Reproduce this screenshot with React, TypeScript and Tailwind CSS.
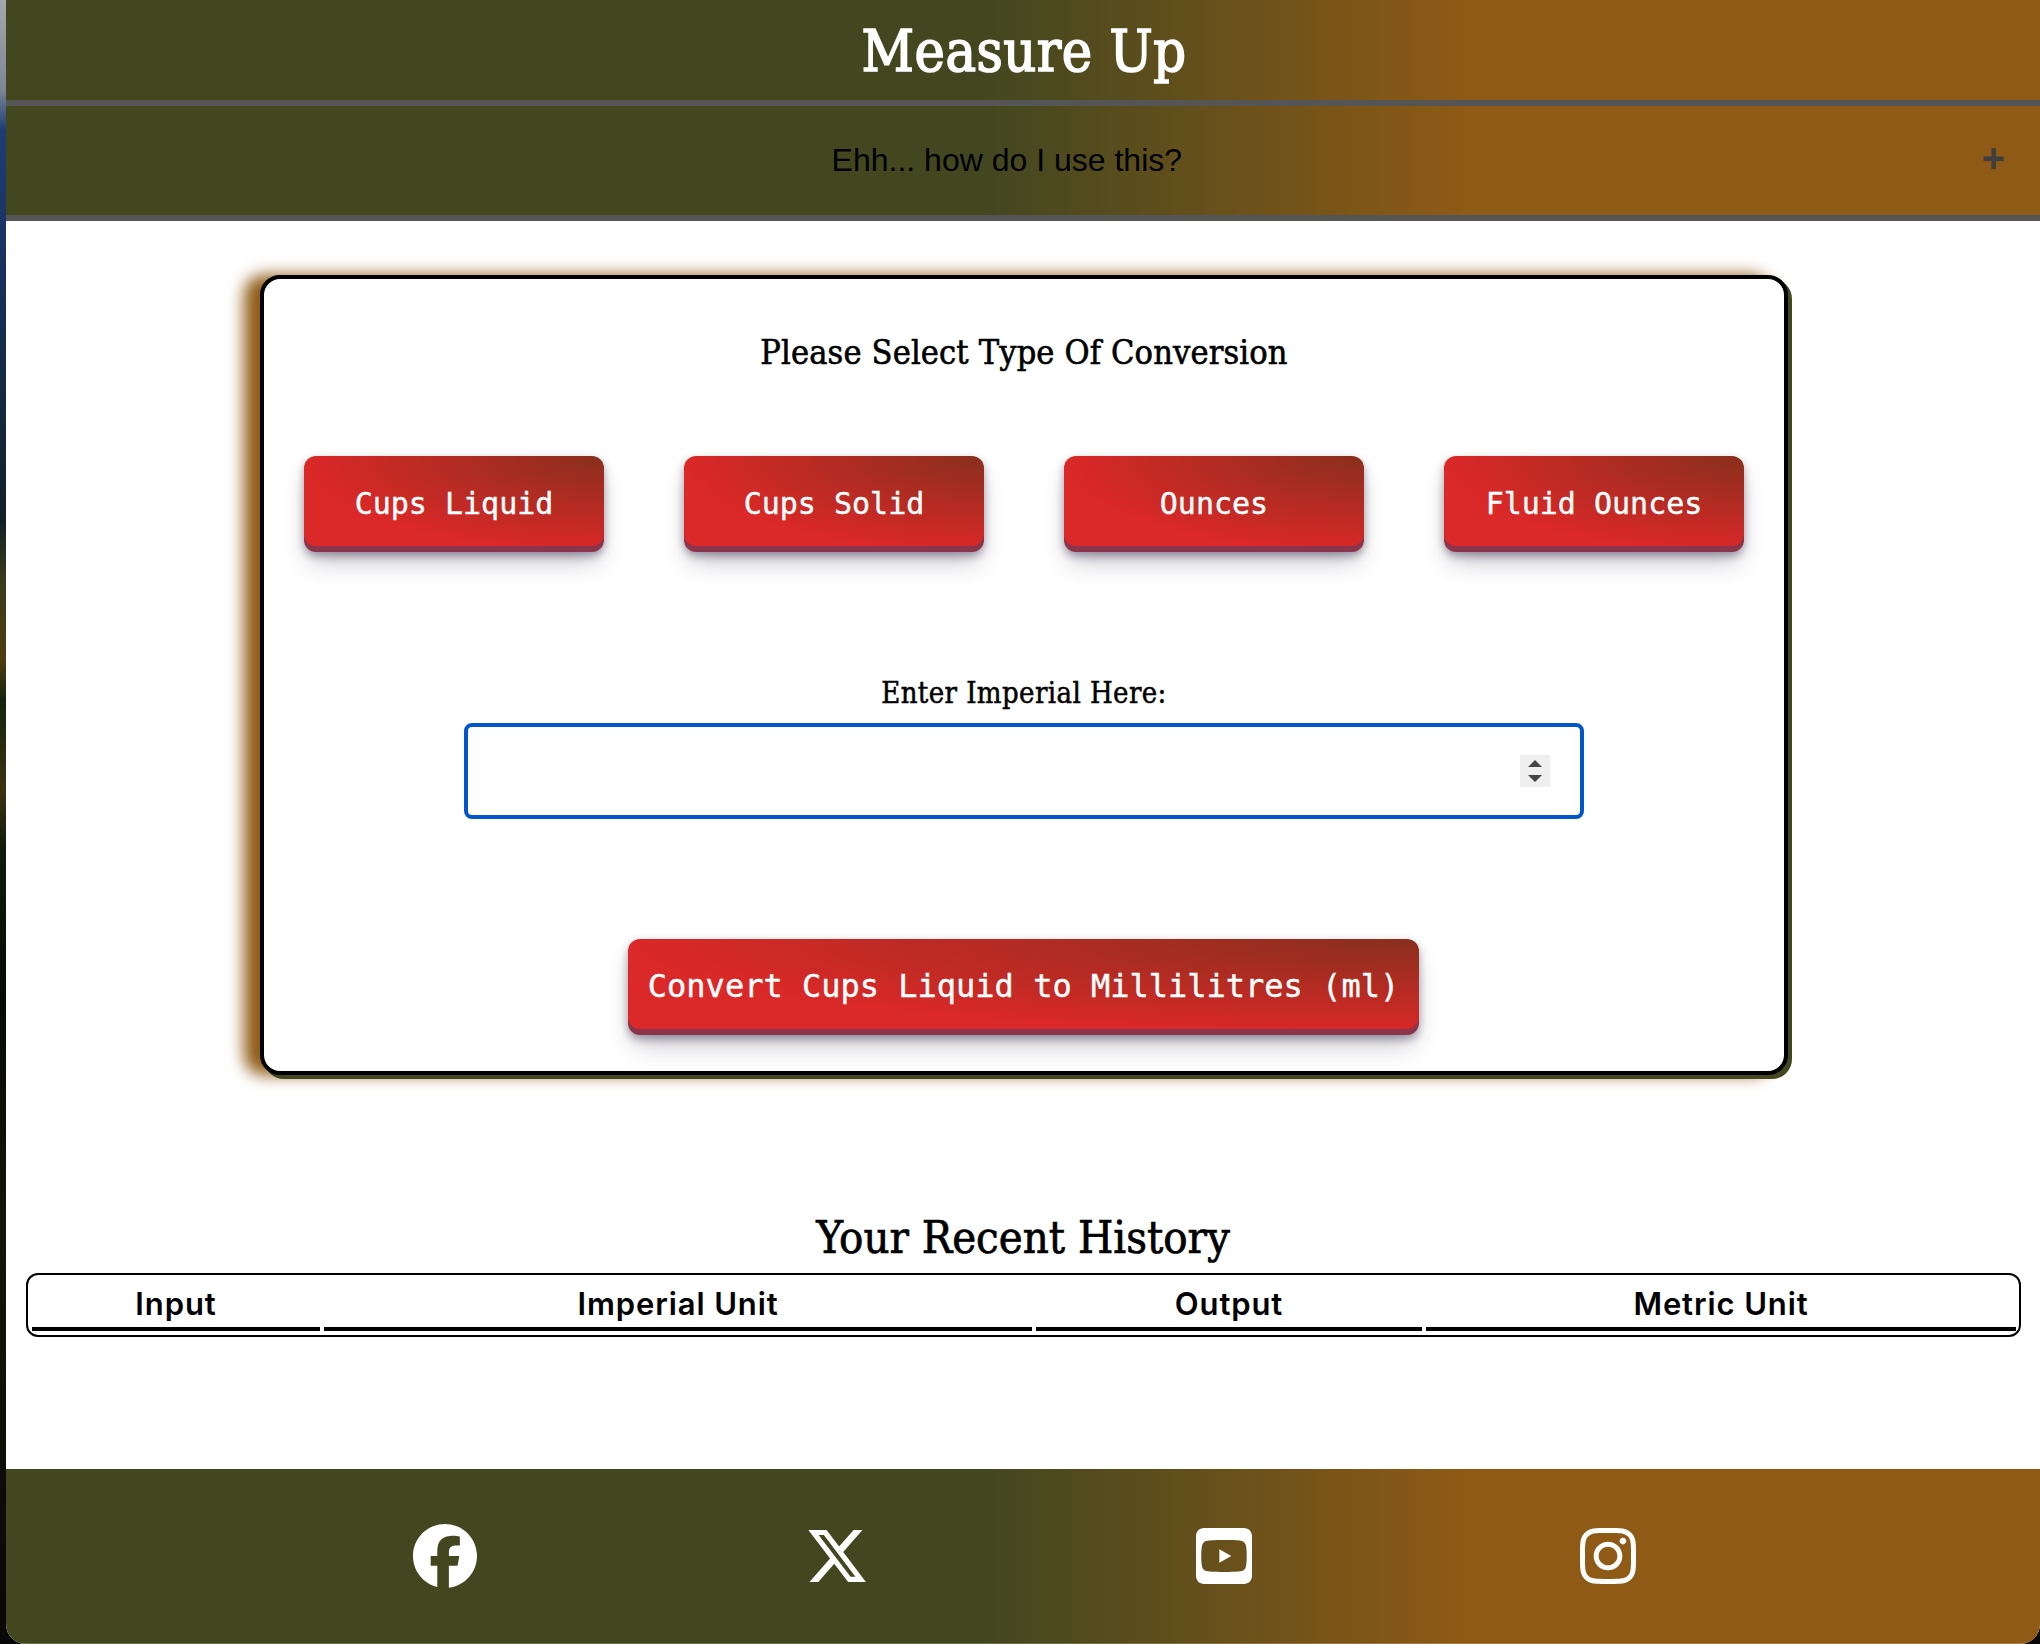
import type { ReactNode } from "react";
import { FaFacebook, FaInstagram, FaSquareYoutube, FaXTwitter } from "react-icons/fa6";

const SERIF = "font-['DejaVu_Serif_Condensed','DejaVu_Serif',serif] [font-stretch:condensed]";
const BAND = "bg-[linear-gradient(90deg,#424720_48%,#8f5a15_72%)]";

function RedButton({ children, className }: { children: ReactNode; className: string }) {
  return (
    <button
      className={`${className} flex h-24 items-center justify-center whitespace-pre rounded-xl bg-[radial-gradient(100%_100%_at_100%_0,#892f1d_0,#db2828_100%)] pb-[2px] font-['DejaVu_Sans_Mono',monospace] text-white [-webkit-text-stroke:0.4px_white] shadow-[0_4px_8px_rgba(45,35,66,0.4),0_14px_26px_-6px_rgba(45,35,66,0.3),inset_0_-6px_0_rgba(58,65,111,0.5)]`}
    >
      {children}
    </button>
  );
}

const UNITS = ["Cups Liquid", "Cups Solid", "Ounces", "Fluid Ounces"];
const COLUMNS = ["Input", "Imperial Unit", "Output", "Metric Unit"];

export default function App() {
  return (
    <div className="flex h-[1644px] w-[2040px] overflow-hidden bg-[linear-gradient(180deg,#a3a8ad_0px,#7c8794_90px,#1f3c74_130px,#1a3263_250px,#14283f_400px,#122026_520px,#3a3a1c_580px,#4f3c12_660px,#14240f_700px,#3c3210_790px,#0f1a0b_850px,#050b05_1000px,#141509_1230px,#080806_1644px)]">
      <div className="ml-[6px] flex w-[2034px] flex-col overflow-hidden rounded-b-[20px] bg-white text-black">
        <header className={`${BAND} flex h-[100px] items-center justify-center`}>
          <h1 className={`${SERIF} pl-[2px] pt-[3px] text-[57px] leading-none tracking-[0.5px] text-white [-webkit-text-stroke:1.6px_white]`}>Measure Up</h1>
        </header>
        <button className={`${BAND} flex h-[121px] items-center border-y-[6px] border-[#555] pl-[26px] pr-[35px] font-['Liberation_Sans',sans-serif]`}>
          <span className="flex-1 pb-[2px] text-center text-[32px] leading-none">Ehh... how do I use this?</span>
          <span className="pb-[6px] text-[40px] font-bold leading-none text-[#3f3f3f]">+</span>
        </button>

        <main className="flex flex-1 flex-col items-center">
          <section className="ml-[2px] mt-[54px] flex h-[800px] w-[1528px] flex-col items-center rounded-[20px] border-4 border-black bg-white shadow-[4px_4px_0_#424720,-16px_0_16px_#8f5a15]">
            <h2 className={`${SERIF} mt-[53px] h-10 text-[34px] leading-10 tracking-[0.15px] [-webkit-text-stroke:0.6px_black]`}>Please Select Type Of Conversion</h2>
            <div className="mt-[84px] flex gap-20">
              {UNITS.map((u) => (
                <RedButton key={u} className="w-[300px] text-[30px]">{u}</RedButton>
              ))}
            </div>
            <label className={`${SERIF} mt-[121px] h-10 text-[29px] leading-10 tracking-[0.4px] [-webkit-text-stroke:0.5px_black]`}>Enter Imperial Here:</label>
            <div className="mt-[10px] flex h-24 w-[1120px] items-center justify-end rounded-lg border-4 border-[#0057cc] pr-[30px]">
              <div className="flex h-8 w-[30px] items-center justify-center bg-[#efefef]">
                <svg viewBox="0 0 16 24" className="h-6 w-4 fill-[#444]">
                  <path d="M1 8 8 1l7 7zM1 16l7 7 7-7z" />
                </svg>
              </div>
            </div>
            <RedButton className="mr-[1px] mt-[120px] w-[791px] text-[32px]">Convert Cups Liquid to Millilitres (ml)</RedButton>
          </section>

          <h2 className={`${SERIF} mt-[133px] h-[60px] text-[45px] leading-[60px] [-webkit-text-stroke:0.7px_black]`}>Your Recent History</h2>
          <div className="ml-[1px] mt-[5px] grid h-16 w-[1995px] grid-cols-[288px_708px_386px_590px] gap-1 rounded-xl border-2 border-black p-1">
            {COLUMNS.map((c) => (
              <div key={c} className="flex h-[52px] items-center justify-center border-b-4 border-black font-['Inter',sans-serif] text-[31px] font-semibold leading-none tracking-[0.9px]">
                {c}
              </div>
            ))}
          </div>
        </main>

        <footer className={`${BAND} flex h-[175px] items-center gap-[327.5px] border-b border-white/20 pl-[407px] text-white`}>
          <FaFacebook className="h-16 w-16" />
          <FaXTwitter className="h-16 w-16" />
          <FaSquareYoutube className="h-16 w-14" />
          <FaInstagram className="h-16 w-14" />
        </footer>
      </div>
    </div>
  );
}
